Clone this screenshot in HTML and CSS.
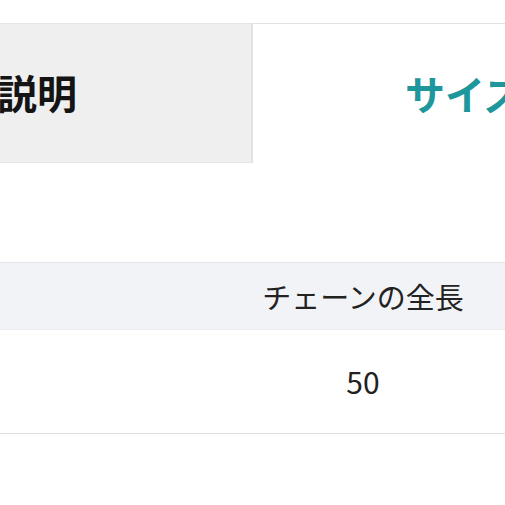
FILE: index.html
```html
<!DOCTYPE html>
<html lang="ja">
<head>
<meta charset="utf-8">
<link rel="stylesheet" href="styles.css">
</head>
<body>
<div class="page">
  <div class="tabs">
    <div class="tab tab-inactive"><span class="tab-label">説明</span></div>
    <div class="tab tab-active"><span class="tab-label">サイズ</span></div>
  </div>
  <table class="size-table">
    <thead>
      <tr><th class="col-a"></th><th class="col-b">チェーンの全長</th></tr>
    </thead>
    <tbody>
      <tr><td class="col-a"></td><td class="col-b">50</td></tr>
    </tbody>
  </table>
</div>
</body>
</html>
```
FILE: styles.css
```css
html, body {
  margin: 0;
  padding: 0;
  background: #ffffff;
}
body {
  width: 505px;
  height: 505px;
  overflow: hidden;
  font-family: "Noto Sans CJK JP", "Noto Sans", sans-serif;
  color: #222222;
}
.page {
  padding-top: 23px;
}
.tabs {
  display: flex;
  height: 140px;
  white-space: nowrap;
}
.tab {
  display: flex;
  align-items: center;
  box-sizing: border-box;
  overflow: hidden;
}
.tab-label {
  font-size: 40px;
  font-weight: 700;
  line-height: 1;
}
.tab-inactive {
  width: 253px;
  flex: none;
  background: #efefef;
  border-top: 1px solid #e6e6e6;
  border-right: 2px solid #e2e2e2;
  border-bottom: 1px solid #e6e6e6;
  padding-bottom: 2px;
}
.tab-inactive .tab-label {
  color: #141414;
  margin-left: -3px;
}
.tab-active {
  flex: 1;
  background: #ffffff;
  border-top: 1px solid #e2e2e2;
  padding-left: 152px;
  padding-bottom: 2px;
}
.tab-active .tab-label {
  color: #1d979b;
}
.size-table {
  margin-top: 99px;
  width: 505px;
  border-collapse: collapse;
  table-layout: fixed;
}
.size-table th,
.size-table td {
  padding: 0;
  text-align: center;
  vertical-align: middle;
  font-weight: 400;
  color: #222222;
}
.size-table th {
  font-size: 29px;
}
.size-table thead tr {
  background: #f2f3f6;
  height: 67px;
  border-top: 1px solid #e3e5e9;
  border-bottom: 1px solid #eceef1;
}
.size-table tbody tr {
  height: 104px;
  border-bottom: 1px solid #e0e0e0;
}
.size-table .col-a {
  width: 221px;
}
.size-table td.col-b {
  font-size: 30px;
  padding-bottom: 2px;
}
```
